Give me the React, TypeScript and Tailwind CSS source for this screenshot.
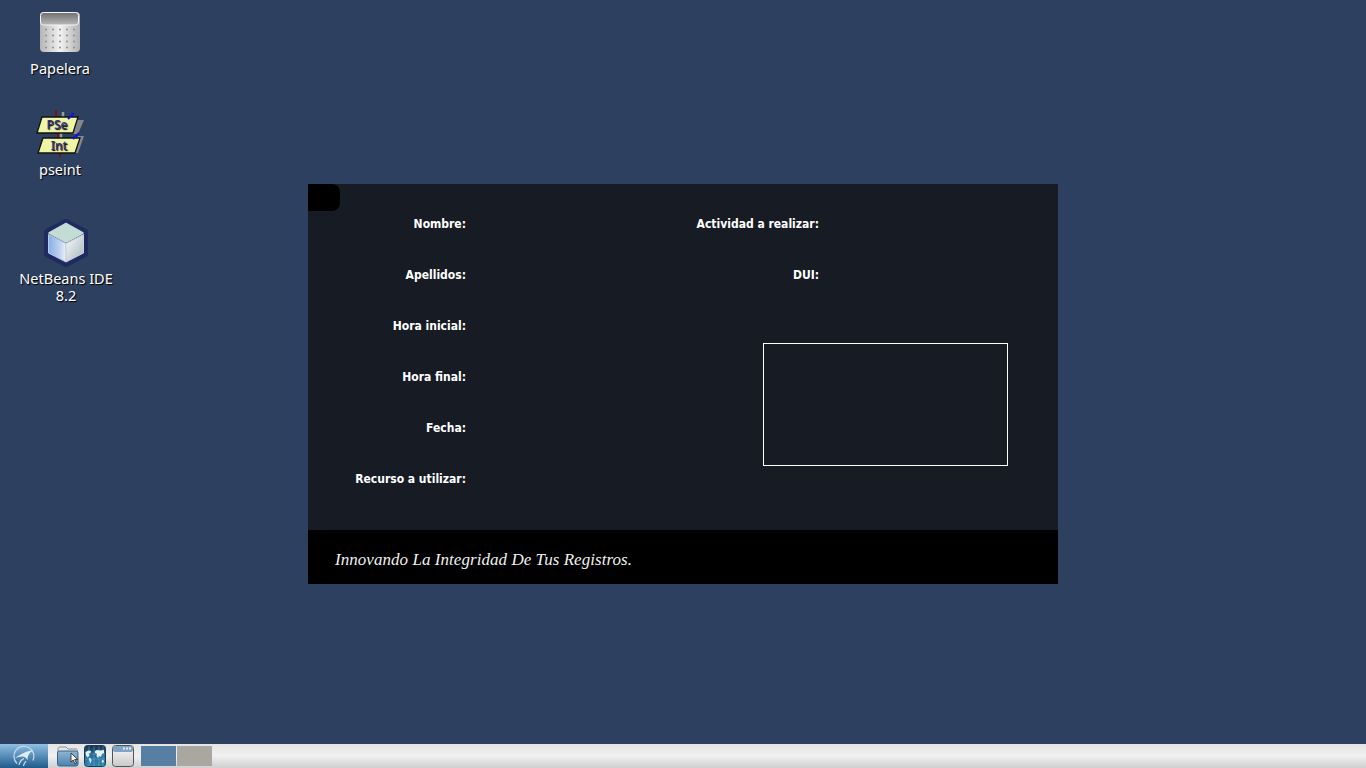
const labelsLeft = ['Nombre:', 'Apellidos:', 'Hora inicial:', 'Hora final:', 'Fecha:', 'Recurso a utilizar:'];
const labelsRight = ['Actividad a realizar:', 'DUI:'];

function TrashIcon() {
  return (
    <svg width="42" height="42" viewBox="0 0 42 42">
      <defs>
        <linearGradient id="trashBody" x1="0" y1="0" x2="1" y2="0">
          <stop offset="0" stopColor="#b5b5b5" />
          <stop offset="0.5" stopColor="#f2f2f2" />
          <stop offset="1" stopColor="#b0b0b0" />
        </linearGradient>
        <linearGradient id="trashLid" x1="0" y1="0" x2="0" y2="1">
          <stop offset="0" stopColor="#6f6f6f" />
          <stop offset="1" stopColor="#b9b9b9" />
        </linearGradient>
      </defs>
      <rect x="1" y="1" width="40" height="40" rx="4" fill="url(#trashBody)" />
      <rect x="1.5" y="1.5" width="38" height="12.5" rx="3" fill="url(#trashLid)" stroke="#f4f4f4" strokeWidth="1" />
      {[0, 1, 2, 3].map((r) =>
        [0, 1, 2, 3, 4].map((c) => (
          <circle key={`${r}-${c}`} cx={7 + c * 7} cy={18.5 + r * 6} r="1" fill="#8f8f8f" />
        )),
      )}
    </svg>
  );
}

function PseintIcon() {
  return (
    <svg width="50" height="48" viewBox="0 0 50 48">
      <path d="M41 11h8l-6 14h-7z" fill="#85878c" />
      <path d="M43 27h6l-6 17h-7z" fill="#85878c" />
      <path d="M28 3v6M26 23v7" stroke="#9a9a9a" strokeWidth="2.500" />
      <path d="M21 1v7M23 23v7M25 44v4" stroke="#7a1010" strokeWidth="2" />
      <path d="M7 8h36l-5 16H2z" fill="#eef5a4" stroke="#111" strokeWidth="1.300" />
      <path d="M8 29h37l-5 15H3z" fill="#eef5a4" stroke="#111" strokeWidth="1.300" />
      <path d="M39 4l-6 6M44 24l-6 6" stroke="#1212e0" strokeWidth="2" />
      <text x="22" y="20" textAnchor="middle" fontFamily="'Noto Sans', sans-serif" fontSize="12" fontWeight="500" fill="#2f2f8c">PSe</text>
      <text x="24" y="41" textAnchor="middle" fontFamily="'Noto Sans', sans-serif" fontSize="12" fontWeight="500" fill="#2f2f8c">Int</text>
    </svg>
  );
}

function NetBeansIcon() {
  return (
    <svg width="48" height="48" viewBox="0 0 48 48">
      <defs>
        <linearGradient id="nbLeft" x1="0" y1="0" x2="1" y2="0">
          <stop offset="0" stopColor="#86aeea" />
          <stop offset="0.700" stopColor="#c5d6ef" />
          <stop offset="1" stopColor="#eef3f8" />
        </linearGradient>
        <linearGradient id="nbRight" x1="0" y1="0" x2="1" y2="1">
          <stop offset="0" stopColor="#fafcfc" />
          <stop offset="1" stopColor="#a5b5bd" />
        </linearGradient>
      </defs>
      <path d="M24 3L43 13v22L24 45 5 35V13z" fill="#1f2b5e" stroke="#1f2b5e" strokeWidth="6" strokeLinejoin="round" />
      <path d="M24 4.500L41 14 24 23 7 14z" fill="#c4dcd6" stroke="#c4dcd6" strokeWidth="1.500" strokeLinejoin="round" />
      <path d="M6.500 15.500l17.500 9V43L6.500 34z" fill="url(#nbLeft)" stroke="#b4c9ec" strokeWidth="1" strokeLinejoin="round" />
      <path d="M41.500 15.500L24 24.500V43l17.500-9z" fill="url(#nbRight)" stroke="#c6d2d6" strokeWidth="1" strokeLinejoin="round" />
    </svg>
  );
}

function StartLogo() {
  return (
    <svg width="24" height="22" viewBox="0 0 24 22">
      <path d="M5 18.500A10 10 0 1 1 21 15.500" fill="none" stroke="#c3d8e8" strokeWidth="1.300" />
      <path d="M3 13C9 9 14 6 21 5.500 17 8 15.500 11 15.500 15 14 12.500 12.500 11.500 10.500 11.500 8 11.500 5.500 12.300 3 13z" fill="#dfecf5" />
      <path d="M7 20c.7-3.500 2.500-5.500 5-6.500M11.500 21c.5-2.500 1.300-3.800 2.500-4.800" stroke="#c8dcea" strokeWidth="1.200" fill="none" />
    </svg>
  );
}

function FolderIcon() {
  return (
    <svg width="24" height="22" viewBox="0 0 24 22">
      <defs>
        <linearGradient id="folderFront" x1="0" y1="0" x2="0" y2="1">
          <stop offset="0" stopColor="#8fb5d5" />
          <stop offset="1" stopColor="#4b82ae" />
        </linearGradient>
      </defs>
      <path d="M2 3.500C2 2.500 3 2 4 2h6l2 2h8c1 0 1.500 1 1.500 2v1H2z" fill="#e2e6ea" stroke="#8a9299" />
      <rect x="1.500" y="6" width="20.500" height="15" rx="2" fill="url(#folderFront)" stroke="#3a6485" />
      <path d="M15 8v9l2.200-2 1.800 4 1.500-.7-1.800-3.800h3z" fill="#f5f5f5" stroke="#222" strokeWidth="0.800" />
    </svg>
  );
}

function GlobeIcon() {
  return (
    <svg width="22" height="22" viewBox="0 0 22 22">
      <defs>
        <linearGradient id="globeBg" x1="0" y1="0" x2="0" y2="1">
          <stop offset="0" stopColor="#14304c" />
          <stop offset="0.500" stopColor="#2a6c97" />
          <stop offset="1" stopColor="#2f86b3" />
        </linearGradient>
      </defs>
      <rect x="0.500" y="0.500" width="21" height="21" rx="3" fill="url(#globeBg)" stroke="#1a3a58" />
      <path d="M1 9h20M1 14h20M5 1v20M10 1v20M15 1v20M19 1v20" stroke="#7cc0de" strokeWidth="0.400" />
      <path d="M1.500 7l3-1.500 2.500.5-.5 2-2 .5 1 2-2 2-1.500-2zM5 13l2 .5.500 2-1 3-1-2.500zM11 6l2-1 3 .5 4-.5v3l-2 1-1 3-2-1-1 2-1.500-2 .5-2-2-1z" fill="#e3f1f7" />
      <path d="M18 15l2 .5-.5 2-2 0z" fill="#e3f1f7" />
    </svg>
  );
}

function WindowIcon() {
  return (
    <svg width="22" height="22" viewBox="0 0 22 22">
      <defs>
        <linearGradient id="winBody" x1="0" y1="0" x2="0" y2="1">
          <stop offset="0" stopColor="#fafafa" />
          <stop offset="1" stopColor="#c9c9c9" />
        </linearGradient>
      </defs>
      <rect x="0.500" y="0.500" width="21" height="21" rx="3" fill="url(#winBody)" stroke="#555" />
      <rect x="1" y="1" width="20" height="6" rx="2" fill="#7fa3c4" />
      <rect x="11" y="2.500" width="2" height="2" fill="#e6eef5" />
      <rect x="14" y="2.500" width="2" height="2" fill="#e6eef5" />
      <rect x="17" y="2.500" width="2" height="2" fill="#e6eef5" />
    </svg>
  );
}

function DesktopIcon({ className, children, label }: { className: string; children: React.ReactNode; label: React.ReactNode }) {
  return (
    <div className={`absolute flex flex-col items-center text-center text-white text-[14.5px] leading-[17px] font-['Noto_Sans','Open_Sans',sans-serif] [text-shadow:1px_1px_1px_#000] ${className}`}>
      {children}
      {label}
    </div>
  );
}

export default function App() {
  return (
    <div className="relative flex flex-col w-full h-screen overflow-hidden bg-[#2d4060]">
      <div className="relative flex-1">
        <DesktopIcon className="left-[10px] top-[11px] w-[100px]" label={<span className="mt-[7px]">Papelera</span>}>
          <TrashIcon />
        </DesktopIcon>
        <DesktopIcon className="left-[10px] top-[109px] w-[100px]" label={<span className="mt-[4px]">pseint</span>}>
          <PseintIcon />
        </DesktopIcon>
        <DesktopIcon className="left-[16px] top-[219px] w-[100px]" label={<span className="mt-[3px]">NetBeans IDE<br />8.2</span>}>
          <NetBeansIcon />
        </DesktopIcon>

        {/* ventana del formulario */}
        <div className="absolute left-[308px] top-[184px] flex flex-col w-[750px] h-[400px] bg-[#161b24] text-white font-['DejaVu_Sans_Condensed','DejaVu_Sans',sans-serif]">
          <div className="absolute left-0 top-0 w-[32px] h-[27px] bg-black rounded-r-[8px]" />
          <div className="flex flex-1 pt-[15px] text-[12px] font-bold text-right">
            <div className="flex flex-col w-[158px]">
              {labelsLeft.map((l) => (
                <div key={l} className="h-[51px] leading-[51px] whitespace-nowrap">{l}</div>
              ))}
            </div>
            <div className="flex flex-col w-[353px]">
              {labelsRight.map((l) => (
                <div key={l} className="h-[51px] leading-[51px] whitespace-nowrap">{l}</div>
              ))}
              <div className="ml-[297px] mt-[42px] w-[245px] h-[123px] shrink-0 border border-white" />
            </div>
          </div>
          <div className="flex items-center h-[54px] pl-[27px] pt-[5px] bg-black text-[17px] tracking-[0.05px] text-[#f0f0f0] font-['Liberation_Serif',cursive] italic">
            Innovando La Integridad De Tus Registros.
          </div>
        </div>
      </div>

      {/* barra de tareas */}
      <div className="flex items-center h-[24px] bg-gradient-to-b from-[#e4e4e4] via-[#f0f0f0] to-[#cfcfcf]">
        <div className="flex items-center justify-center w-[48px] h-full bg-gradient-to-b from-[#8fc0e4] to-[#1d5c8c]">
          <StartLogo />
        </div>
        <div className="flex items-center h-full ml-[8px] gap-[4px]">
          <FolderIcon />
          <GlobeIcon />
          <div className="ml-[2px]"><WindowIcon /></div>
        </div>
        <div className="w-[35px] h-[20px] ml-[7px] bg-[#587ea3]" />
        <div className="w-[35px] h-[20px] ml-[1px] bg-[#aaa6a0]" />
      </div>
    </div>
  );
}
